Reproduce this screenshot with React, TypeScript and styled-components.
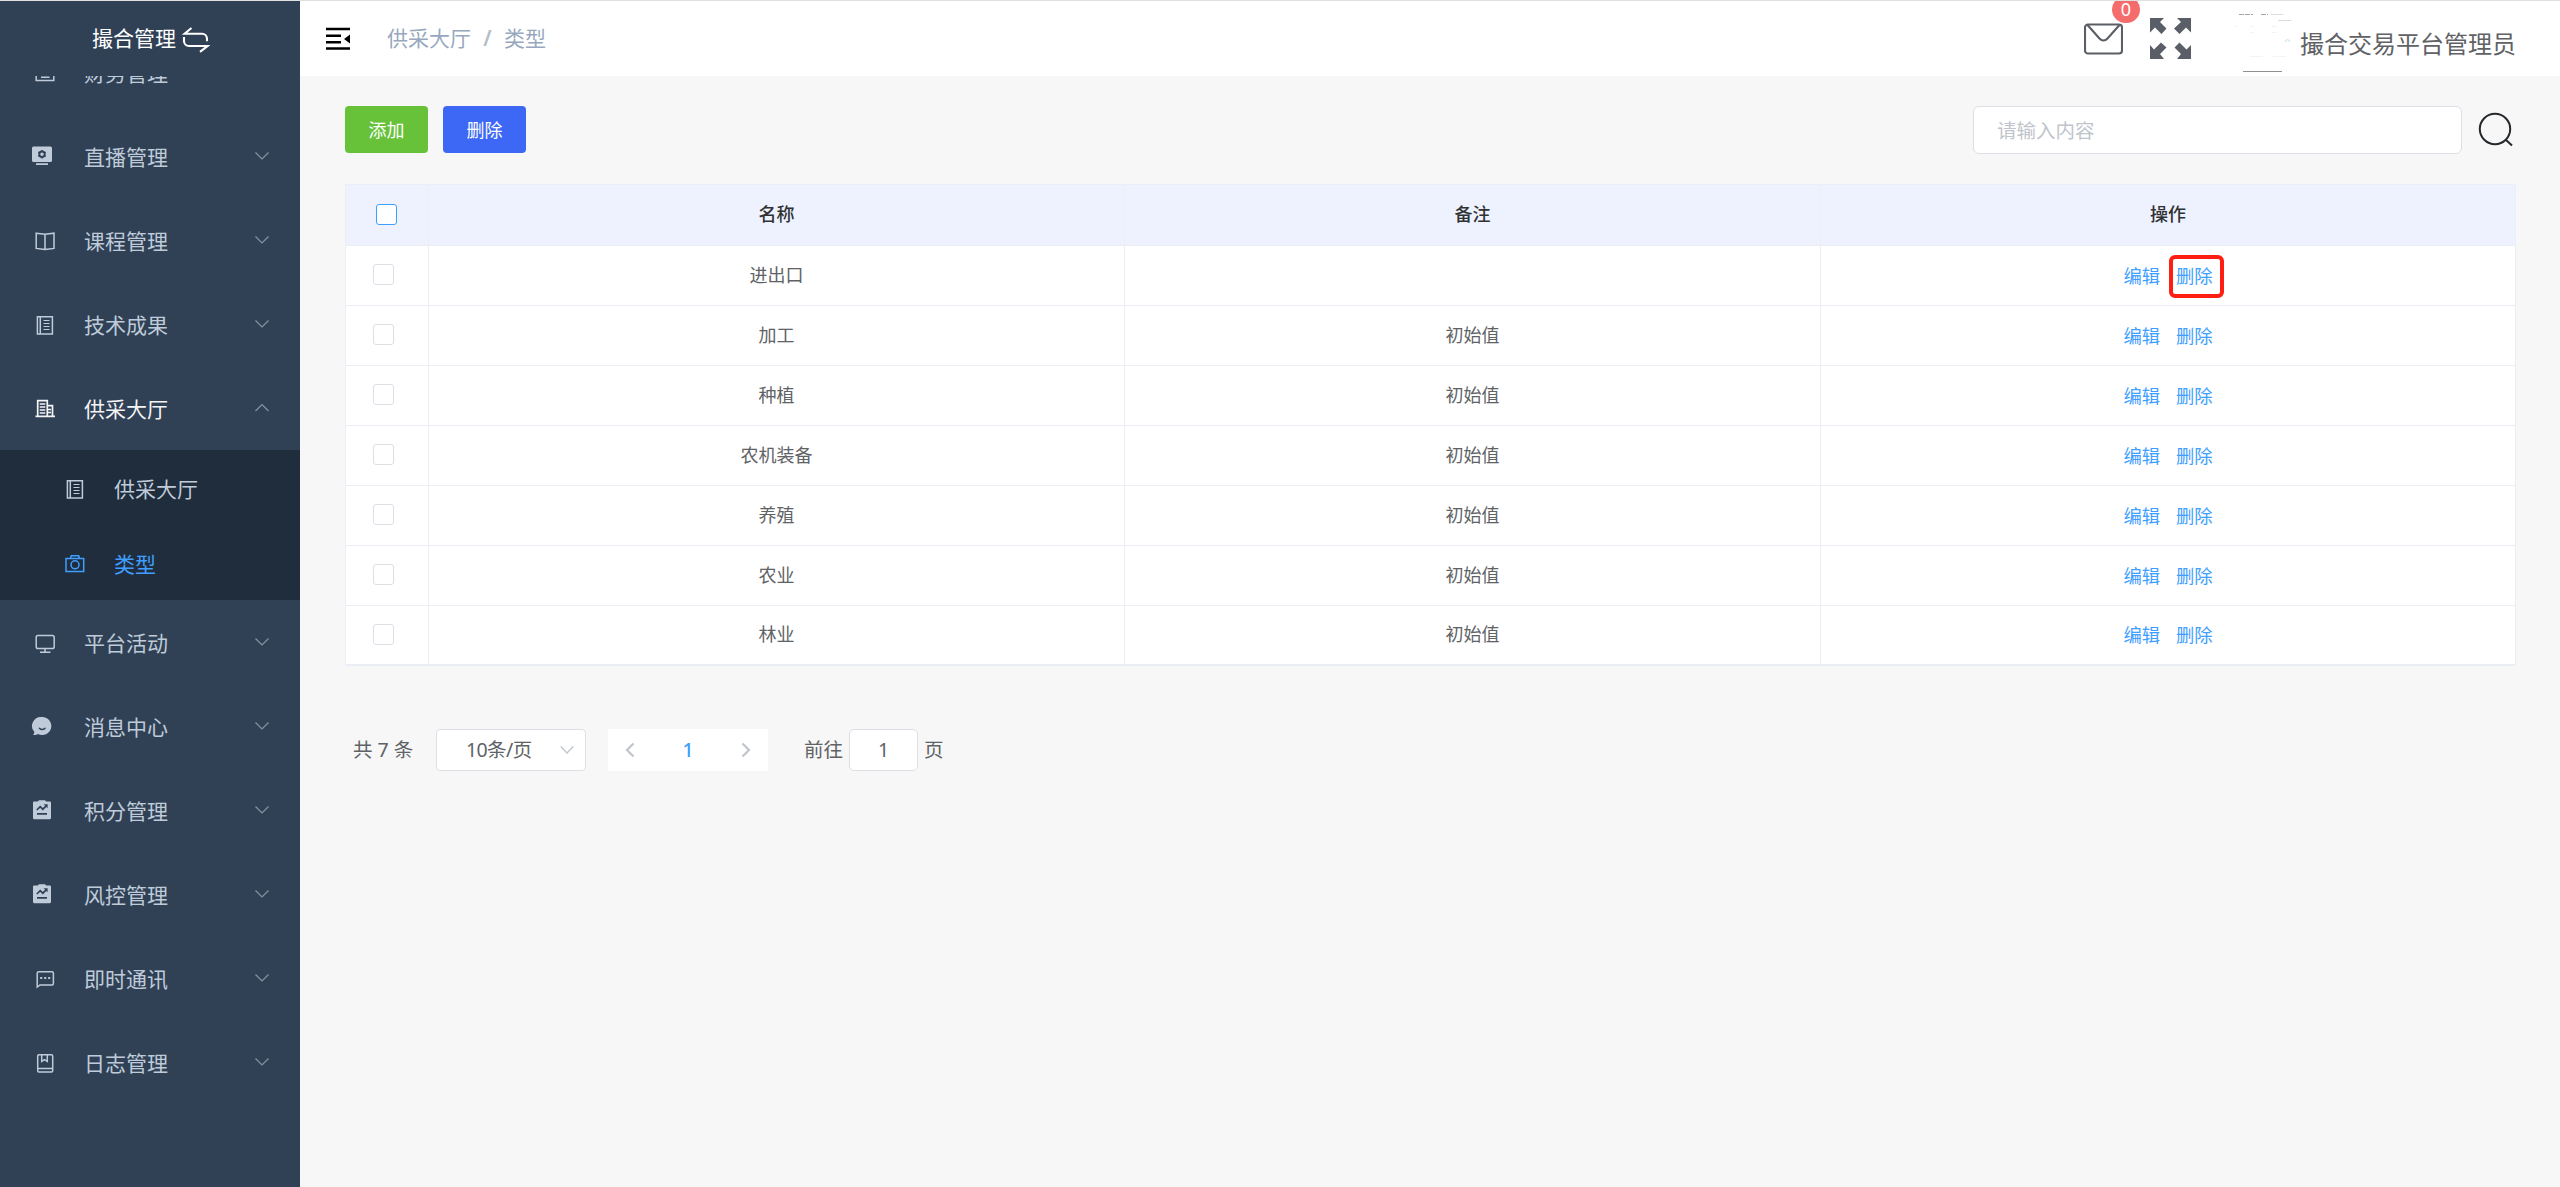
import React from "react";
import styled, { createGlobalStyle, css } from "styled-components";

const GlobalStyle = createGlobalStyle`
  *, *::before, *::after { box-sizing: border-box; }
  body {
    margin: 0;
    font-family: "Noto Sans", "Noto Sans CJK SC", sans-serif;
    color: #606266;
    background: #f7f7f7;
  }
`;

const Page = styled.div`
  display: flex;
  height: 1187px;
  border-top: 1px solid #dfe0df;
  overflow: hidden;
`;

/* ---------- sidebar ---------- */

const Sidebar = styled.aside`
  display: flex;
  flex-direction: column;
  flex: 0 0 300px;
  background: #304156;
`;

const Brand = styled.div`
  display: flex;
  align-items: center;
  flex: 0 0 75px;
  padding: 0 0 1px 92px;
  font-size: 21px;
  line-height: 30px;
  color: #fff;
  svg { margin: 3px 0 0 6px; }
`;

const MenuScroll = styled.nav`
  flex: 1;
  overflow: hidden;
`;

const MenuList = styled.ul`
  list-style: none;
  padding: 0;
  margin: -46px 0 0;
`;

const MenuRow = styled.div<{ $open?: boolean; $solid?: boolean }>`
  display: flex;
  align-items: center;
  height: 84px;
  padding-left: ${(p) => (p.$solid ? 30 : 33)}px;
  padding-right: 30px;
  font-size: 21px;
  color: ${(p) => (p.$open ? "#f4f4f5" : "#bfcbd9")};
`;

const MenuLabel = styled.span<{ $solid?: boolean }>`
  flex: 1;
  margin-left: ${(p) => (p.$solid ? 30 : 27)}px;
  padding-top: 2px;
  line-height: 30px;
`;

const SubMenu = styled.ul`
  list-style: none;
  margin: 0;
  padding: 0;
  background: #1f2d3d;
`;

const SubRow = styled.li<{ $active?: boolean }>`
  display: flex;
  align-items: center;
  height: 75px;
  padding-left: 63px;
  font-size: 21px;
  color: ${(p) => (p.$active ? "#409eff" : "#bfcbd9")};
`;

/* ---------- header ---------- */

const Main = styled.div`
  display: flex;
  flex-direction: column;
  flex: 1;
`;

const Header = styled.header`
  display: flex;
  align-items: center;
  flex: 0 0 75px;
  padding: 0 45px 0 26px;
  background: #fff;
`;

const Breadcrumb = styled.div`
  display: flex;
  flex: 1;
  margin: -1px 0 0 37px;
  font-size: 21px;
  line-height: 30px;
  color: #97a8be;
`;

const Separator = styled.span`
  width: 33px;
  text-align: center;
  color: #b4bccc;
  font-weight: 600;
`;

const MailButton = styled.div`
  position: relative;
  display: flex;
  margin: 1px 27px 0 0;
`;

const Badge = styled.span`
  position: absolute;
  left: 28px;
  top: -27px;
  width: 28px;
  height: 27px;
  border-radius: 14px;
  background: #f56c6c;
  color: #fff;
  font-size: 18px;
  line-height: 27px;
  text-align: center;
`;

const Expand = styled.svg`
  margin-top: -1px;
`;

const Avatar = styled.svg`
  margin: 9px 7px 0 42px;
`;

const UserName = styled.span`
  margin-top: 10px;
  font-size: 24px;
  line-height: 34px;
  width: 215px;
  white-space: nowrap;
`;

/* ---------- toolbar ---------- */

const Content = styled.main`
  flex: 1;
  padding: 30px 44px 0 45px;
  background: #f7f7f7;
`;

const Toolbar = styled.div`
  display: flex;
  align-items: center;
  height: 47px;
  gap: 15px;
  padding-right: 1px;
`;

const Button = styled.button<{ $color: string }>`
  width: 83px;
  height: 47px;
  padding: 1px 0 0;
  border: 0;
  border-radius: 4px;
  background: ${(p) => p.$color};
  color: #fff;
  font-family: inherit;
  font-size: 18px;
  line-height: 26px;
`;

const SearchInput = styled.input`
  width: 489px;
  height: 48px;
  margin-left: auto;
  padding: 1px 23px 0;
  border: 1px solid #dcdfe6;
  border-radius: 6px;
  background: #fff;
  font-family: inherit;
  font-size: 19.5px;
  &::placeholder { color: #c0c4cc; }
`;

/* ---------- table ---------- */

const Table = styled.div`
  margin-top: 31px;
  border-top: 1px solid #ebeef5;
  border-left: 1px solid #ebeef5;
  border-bottom: 1px solid #ebeef5;
  background: #fff;
`;

const Row = styled.div<{ $head?: boolean }>`
  display: grid;
  grid-template-columns: 83px 696px 696px 695px;
  height: ${(p) => (p.$head ? 61 : 60)}px;
  font-size: 18px;
  line-height: 26px;
  ${(p) =>
    p.$head &&
    css`
      background: #eef2ff;
      color: #303133;
      font-weight: 500;
    `}
  &:last-child { height: 59px; }
`;

const Cell = styled.div`
  display: flex;
  align-items: center;
  justify-content: center;
  padding-bottom: 2px;
  border-right: 1px solid #ebeef5;
  border-bottom: 1px solid #ebeef5;
`;

const CheckCell = styled(Cell)<{ $head?: boolean }>`
  justify-content: flex-start;
  padding-left: ${(p) => (p.$head ? 30 : 27)}px;
`;

const Checkbox = styled.span<{ $focus?: boolean }>`
  width: 21px;
  height: 21px;
  margin-top: ${(p) => (p.$focus ? 1 : 0)}px;
  border: 1px solid ${(p) => (p.$focus ? "#409eff" : "#dcdfe6")};
  border-radius: 3px;
  background: #fff;
`;

const Actions = styled.div`
  display: flex;
  gap: 16px;
  margin-top: 2px;
`;

const ActionLink = styled.a<{ $marked?: boolean }>`
  position: relative;
  color: #409eff;
  font-size: 18.3px;
  ${(p) =>
    p.$marked &&
    css`
      &::after {
        content: "";
        position: absolute;
        left: -7px;
        top: -8px;
        width: 55px;
        height: 43px;
        border: 4px solid #ff1e12;
        border-radius: 6px;
      }
    `}
`;

/* ---------- pagination ---------- */

const Pagination = styled.div`
  display: flex;
  align-items: center;
  height: 42px;
  margin: 63px 0 0 8px;
  font-size: 19.5px;
  line-height: 28px;
`;

const Total = styled.span`
  width: 83px;
`;

const SizeSelect = styled.div`
  display: flex;
  align-items: center;
  justify-content: space-between;
  width: 150px;
  height: 42px;
  padding: 0 10px 0 29px;
  border: 1px solid #dcdfe6;
  border-radius: 4px;
  background: #fff;
  letter-spacing: -0.6px;
`;

const Pager = styled.div`
  display: flex;
  align-items: center;
  justify-content: space-between;
  width: 160px;
  height: 42px;
  margin-left: 22px;
  padding: 0 16px;
  background: #fff;
  color: #409eff;
  font-weight: 500;
`;

const JumpLabel = styled.span`
  margin-left: 36px;
`;

const JumpInput = styled.span`
  width: 69px;
  height: 42px;
  margin: 0 6px;
  border: 1px solid #dcdfe6;
  border-radius: 5px;
  background: #fff;
  text-align: center;
  line-height: 40px;
`;

/* ---------- icons ---------- */

type IconName =
  | "wallet" | "live" | "book" | "notebook" | "building" | "camera"
  | "monitor" | "comment" | "claim" | "chat" | "journal";

const glyphs: Record<IconName, React.ReactNode> = {
  wallet: <path d="M3.2 5h17.6v15.6H3.2zM8 17.3h8.5" />,
  live: (
    <g stroke="none">
      <path fill="currentColor" d="M3.5 2.5h17a1.5 1.5 0 0 1 1.5 1.5v12.5a1.5 1.5 0 0 1-1.5 1.5h-17A1.5 1.5 0 0 1 2 16.500V4a1.500 1.500 0 0 1 1.500-1.500zM6 19.300h12v1.700H6z" />
      <circle cx="12" cy="10.200" r="2.700" fill="none" stroke="#304156" strokeWidth="1.900" />
      <path stroke="#304156" strokeWidth="1.500" d="M12 6v1.500M12 13v1.500M8.300 8.100l1.300.8M14.400 11.500l1.300.8M8.300 12.300l1.300-.8M14.400 8.900l1.300-.8" />
    </g>
  ),
  book: <path d="M3.200 5.200L12 6.200l9-1v15.200l-9 1-8.800-1zM12 6.200v15" />,
  notebook: (
    <>
      <path d="M4.400 4.700h15v17.200h-15zM7.300 4.700v17.200" />
      <path strokeWidth="1.200" d="M10.500 8.500h6M10.500 11.500h6M10.500 14.500h6M10.500 17.500h6" />
    </>
  ),
  building: (
    <>
      <path strokeWidth="1.700" d="M2.500 20.300h19.500M4.700 20V4.700h9.600V20M14.500 9.700h5V20" />
      <path strokeWidth="1.300" d="M6.700 8h5.600M6.700 11h5.600M6.700 14h5.600M6.700 17h5.600M15 13.500h3M15 16.500h3" />
    </>
  ),
  camera: (
    <>
      <path d="M3 7.500h17.700v13H3zM7.500 7.300l.8-2.600h7.400l.8 2.600" />
      <circle cx="12" cy="13.800" r="4" />
    </>
  ),
  monitor: (
    <>
      <rect x="3.200" y="5.500" width="18" height="13" rx="1.800" />
      <path d="M12 18.500v3.300M7 22.200h10.500" />
    </>
  ),
  comment: (
    <>
      <path fill="currentColor" stroke="none" d="M12.300 3a9 9 0 1 1-4.300 16.900C6.800 20.800 5 21.200 3.200 21c.6-.9 1.100-1.900 1.200-3A9 9 0 0 1 12.300 3z" />
      <path stroke="#304156" strokeWidth="1.500" strokeLinecap="round" d="M9.400 14.200c1.600 1.700 4 1.700 5.600 0" />
    </>
  ),
  claim: (
    <>
      <path fill="currentColor" stroke="none" d="M4.200 3.500H8c.3-.8.800-1.300 1.600-1.300h4.800c.8 0 1.300.5 1.600 1.300h3.800c.7 0 1.200.5 1.200 1.200v15.400c0 .7-.5 1.200-1.200 1.200H4.200c-.7 0-1.200-.5-1.200-1.200V4.700c0-.7.5-1.200 1.200-1.200z" />
      <path stroke="#304156" strokeWidth="1.700" d="M6.800 12l3.400-3.300 2.600 2.500 3.700-3.600M7 15.800h10" />
      <path fill="#304156" stroke="none" d="M13.600 6.300h4v4z" />
    </>
  ),
  chat: (
    <>
      <path d="M4.200 21V7.200c0-.8.6-1.500 1.500-1.500h13.200c.8 0 1.500.6 1.500 1.500v10.200c0 .8-.6 1.500-1.500 1.500H7z" />
      <path strokeWidth="2" d="M7.200 12h2M11.200 12h2M15.200 12h2" />
    </>
  ),
  journal: (
    <>
      <rect x="4.700" y="4.700" width="15" height="17.300" rx="1.200" />
      <path d="M4.700 18.600h15M8.700 5v6.500l2.800-1.800 2.800 1.800V5" />
    </>
  ),
};

const Icon = ({ name }: { name: IconName }) => (
  <svg width="24" height="24" viewBox="0 0 24 24" fill="none" stroke="currentColor" strokeWidth="1.500">
    {glyphs[name]}
  </svg>
);

const Chevron = ({ up }: { up?: boolean }) => (
  <svg width="16" height="10" viewBox="0 0 16 10" fill="none" stroke="#8793a3" strokeWidth="1.200">
    <path d={up ? "M1.500 8L8 1.500 14.500 8" : "M1.500 1.500L8 8l6.500-6.500"} />
  </svg>
);

/* ---------- data ---------- */

type Item = { icon: IconName; label: string; solid?: boolean; children?: { icon: IconName; label: string; active?: boolean }[] };

const menu: Item[] = [
  { icon: "wallet", label: "财务管理" },
  { icon: "live", label: "直播管理", solid: true },
  { icon: "book", label: "课程管理" },
  { icon: "notebook", label: "技术成果" },
  {
    icon: "building",
    label: "供采大厅",
    children: [
      { icon: "notebook", label: "供采大厅" },
      { icon: "camera", label: "类型", active: true },
    ],
  },
  { icon: "monitor", label: "平台活动" },
  { icon: "comment", label: "消息中心", solid: true },
  { icon: "claim", label: "积分管理", solid: true },
  { icon: "claim", label: "风控管理", solid: true },
  { icon: "chat", label: "即时通讯" },
  { icon: "journal", label: "日志管理" },
];

const rows = [
  { name: "进出口", note: "", marked: true },
  { name: "加工", note: "初始值" },
  { name: "种植", note: "初始值" },
  { name: "农机装备", note: "初始值" },
  { name: "养殖", note: "初始值" },
  { name: "农业", note: "初始值" },
  { name: "林业", note: "初始值" },
];

export default function App() {
  return (
    <>
      <GlobalStyle />
      <Page>
        <Sidebar>
          <Brand>
            撮合管理
            <svg width="28" height="26" viewBox="0 0 28 26" fill="none" stroke="#fff" strokeWidth="2.100">
              <path d="M9.500 1L2.500 6.800H20a5 5 0 0 1 5 5v2.500M2 10v4a5 5 0 0 0 5 5H25.500L18 24.800" />
            </svg>
          </Brand>
          <MenuScroll>
            <MenuList>
              {menu.map((item) => (
                <li key={item.label}>
                  <MenuRow $open={!!item.children} $solid={item.solid}>
                    <Icon name={item.icon} />
                    <MenuLabel $solid={item.solid}>{item.label}</MenuLabel>
                    <Chevron up={!!item.children} />
                  </MenuRow>
                  {item.children && (
                    <SubMenu>
                      {item.children.map((sub) => (
                        <SubRow key={sub.label} $active={sub.active}>
                          <Icon name={sub.icon} />
                          <MenuLabel>{sub.label}</MenuLabel>
                        </SubRow>
                      ))}
                    </SubMenu>
                  )}
                </li>
              ))}
            </MenuList>
          </MenuScroll>
        </Sidebar>

        <Main>
          <Header>
            <svg width="24" height="24" viewBox="0 0 24 24">
              <path d="M0 .8h24v2.400H0zM0 7.500h15v2.400H0zM0 14h15v2.400H0zM0 20.300h24v2.400H0zM24 7.500v9l-6-4.500z" />
            </svg>
            <Breadcrumb>
              <span>供采大厅</span>
              <Separator>/</Separator>
              <span>类型</span>
            </Breadcrumb>
            <MailButton>
              <svg width="39" height="32" viewBox="0 0 39 32" fill="none" stroke="#5a5e66" strokeWidth="2.100">
                <rect x="1" y="1.500" width="37" height="29" rx="3" />
                <path d="M3.500 2l12 13.500c2.500 2.700 5.500 2.700 8 0L35.500 2" />
              </svg>
              <Badge>0</Badge>
            </MailButton>
            <Expand width="41" height="41" viewBox="0 0 41 41" fill="#5a5e66">
              <path d="M0 0h14l-4 4 6.500 6.500-5 5.500L5 9.500l-5 5zM41 0v14.500l-5-5-6.500 6.500-5.500-5.500L31 4l-4-4zM0 41V27l4 4.500 7-7 5.500 5L10 36l4 5zM41 41H27l4-5-6.500-6.500 5-5 7 7L41 27z" />
            </Expand>
            <Avatar width="60" height="60" viewBox="0 0 60 60" fill="none" stroke="#dcdcdc" strokeWidth="1">
              <path stroke="#a5a5a5" strokeDasharray="5 1" d="M6 1.500h14M28 1.500h7" />
              <path d="M38 1.500h12M45 7.500h13" />
              <path stroke="#f4f4f4" d="M1 13.500h3M17 13.500h4M39 13.500h5M17 19.500h4M39 19.500h5M17 43.500h13M39 43.500h14" />
              <path stroke="#b9dcf5" d="M52 29c1-3 4-3 5 0" />
              <path stroke="#8f9290" d="M10 58.500h39" />
            </Avatar>
            <UserName>撮合交易平台管理员</UserName>
          </Header>

          <Content>
            <Toolbar>
              <Button $color="#67c23a">添加</Button>
              <Button $color="#3c68f5">删除</Button>
              <SearchInput placeholder="请输入内容" />
              <svg width="38" height="38" viewBox="0 0 38 38" fill="none" stroke="#24272b" strokeWidth="2">
                <circle cx="18" cy="18" r="15.200" />
                <path d="M28.500 28.500l6.500 6" />
              </svg>
            </Toolbar>

            <Table>
              <Row $head>
                <CheckCell $head><Checkbox $focus /></CheckCell>
                <Cell>名称</Cell>
                <Cell>备注</Cell>
                <Cell>操作</Cell>
              </Row>
              {rows.map((row) => (
                <Row key={row.name}>
                  <CheckCell><Checkbox /></CheckCell>
                  <Cell>{row.name}</Cell>
                  <Cell>{row.note}</Cell>
                  <Cell>
                    <Actions>
                      <ActionLink>编辑</ActionLink>
                      <ActionLink $marked={row.marked}>删除</ActionLink>
                    </Actions>
                  </Cell>
                </Row>
              ))}
            </Table>

            <Pagination>
              <Total>共 7 条</Total>
              <SizeSelect>
                10条/页
                <svg width="16" height="10" viewBox="0 0 16 10" fill="none" stroke="#c0c4cc" strokeWidth="1.300">
                  <path d="M1.800 1.500L8 8l6.200-6.500" />
                </svg>
              </SizeSelect>
              <Pager>
                <svg width="12" height="16" viewBox="0 0 12 16" fill="none" stroke="#c0c4cc" strokeWidth="2.200">
                  <path d="M9.500 1.500L3 8l6.500 6.500" />
                </svg>
                1
                <svg width="12" height="16" viewBox="0 0 12 16" fill="none" stroke="#c0c4cc" strokeWidth="2.200">
                  <path d="M2.500 1.500L9 8l-6.500 6.500" />
                </svg>
              </Pager>
              <JumpLabel>前往</JumpLabel>
              <JumpInput>1</JumpInput>
              <span>页</span>
            </Pagination>
          </Content>
        </Main>
      </Page>
    </>
  );
}
